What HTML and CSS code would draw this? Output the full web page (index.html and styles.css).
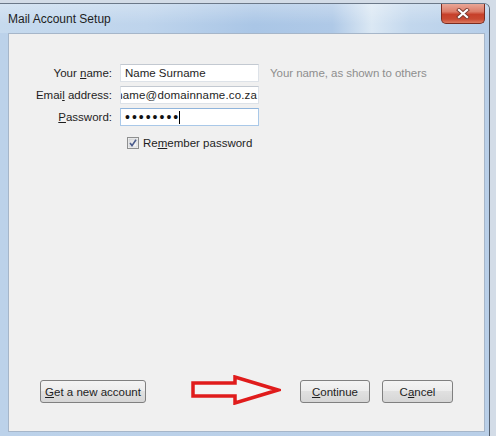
FILE: index.html
```html
<!DOCTYPE html>
<html lang="en">
<head>
<meta charset="utf-8">
<title>Mail Account Setup</title>
<link rel="stylesheet" href="styles.css">
</head>
<body>
<div class="window">
  <div class="titlebar">
    <span class="title">Mail Account Setup</span>
    <div class="close">
      <svg width="14" height="11" viewBox="0 0 14 11">
        <path d="M3 2 L11 9 M11 2 L3 9" stroke="#7a3a30" stroke-width="4" stroke-linecap="square"/>
        <path d="M3 2 L11 9 M11 2 L3 9" stroke="#ffffff" stroke-width="2.2" stroke-linecap="square"/>
      </svg>
    </div>
  </div>
  <div class="content">
    <div class="form">
      <span class="label">Your <u>n</u>ame:</span>
      <div class="field"><span>Name Surname</span></div>
      <span class="hint">Your name, as shown to others</span>

      <span class="label">Emai<u>l</u> address:</span>
      <div class="field field-end"><span class="email">name@domainname.co.za</span></div>
      <span></span>

      <span class="label"><u>P</u>assword:</span>
      <div class="field field-focus"><span class="dots">••••••••</span><span class="caret"></span></div>
      <span></span>

      <div class="check-row">
        <svg class="checkbox" width="12" height="12" viewBox="0 0 12 12">
          <defs>
            <linearGradient id="cb" x1="0" y1="0" x2="1" y2="1">
              <stop offset="0" stop-color="#dcdcdc"/>
              <stop offset="1" stop-color="#fbfbfb"/>
            </linearGradient>
          </defs>
          <rect x="0.5" y="0.5" width="11" height="11" fill="#f4f4f4" stroke="#8e8f8f"/>
          <rect x="2" y="2" width="8" height="8" fill="url(#cb)" stroke="#c6c9ce" stroke-width="0.6"/>
          <path d="M3 6 L5 8.6 L9 2.8" fill="none" stroke="#4a5b8c" stroke-width="1.6"/>
        </svg>
        <span>Re<u>m</u>ember password</span>
      </div>
    </div>

    <div class="footer">
      <button class="btn btn-get"><u>G</u>et a new account</button>
      <button class="btn btn-continue"><u>C</u>ontinue</button>
      <button class="btn btn-cancel">C<u>a</u>ncel</button>
      <svg class="arrow" width="90" height="30" viewBox="0 0 90 30">
        <path d="M2 8 H44 V2 L87 15 L44 28 V21 H2 Z" fill="#f4f4f4" stroke="#e01c1c" stroke-width="3.5" stroke-linejoin="miter"/>
      </svg>
    </div>
  </div>
</div>
</body>
</html>
```

FILE: styles.css
```css
html, body {
  margin: 0;
  height: 100%;
  overflow: hidden;
}

body {
  background: #d3dce7;
  font-family: "Liberation Sans", Arial, sans-serif;
  font-size: 11.5px;
  color: #1e1e1e;
}

.window {
  margin-top: 3px;
  width: 490px;
  height: 433px;
  box-sizing: border-box;
  border-top: 1px solid #6b7888;
  border-right: 1px solid #55606e;
  border-top-right-radius: 6px;
  background: linear-gradient(90deg, #bcd2ea 0%, #b9cfe8 100%);
  display: flex;
  flex-direction: column;
}

.titlebar {
  height: 29px;
  flex: none;
  display: flex;
  align-items: center;
  border-top-right-radius: 5px;
  background:
    linear-gradient(180deg, rgba(255,255,255,0.28) 0%, rgba(255,255,255,0) 70%),
    linear-gradient(90deg, #c6daee 0%, #bed4ec 30%, #aac6e6 52%, #afc9e7 68%, #dbe8f4 76%, #c2d7ed 84%, #b6cee9 100%);
}

.title {
  padding-left: 8px;
  font-size: 12px;
  color: #1e1e1e;
}

.close {
  margin-left: auto;
  margin-right: 4px;
  align-self: flex-start;
  width: 44px;
  height: 20px;
  box-sizing: border-box;
  border: 1px solid #7a2c20;
  border-top: none;
  border-radius: 0 0 5px 5px;
  background: linear-gradient(180deg, #e9a697 0%, #dc7d69 40%, #c6402a 55%, #c94a32 80%, #dd7b62 100%);
  display: flex;
  align-items: center;
  justify-content: center;
}

.content {
  flex: 1;
  margin: 0 4px 4px 8px;
  border: 1px solid #a6b6c9;
  background: #f0f0f0;
  display: flex;
  flex-direction: column;
}

.form {
  display: grid;
  grid-template-columns: 103px 139px auto;
  column-gap: 8px;
  row-gap: 4px;
  padding-top: 30px;
  align-items: center;
}

.label {
  text-align: right;
}

.field {
  height: 18px;
  box-sizing: border-box;
  border: 1px solid #dde2e8;
  border-top-color: #c3c9d1;
  background: #ffffff;
  padding: 0 4px;
  display: flex;
  align-items: center;
  overflow: hidden;
  white-space: nowrap;
}

.field-end {
  justify-content: flex-end;
  padding-right: 1px;
}

.email {
  letter-spacing: 0.15px;
}

.field-focus {
  border-color: #a9c8e8;
  border-top-color: #8fb4dc;
}

.dots {
  font-size: 14px;
  letter-spacing: 2px;
  color: #111;
  line-height: 1;
}

.caret {
  width: 1px;
  height: 13px;
  background: #000;
  margin-left: -1px;
}

.hint {
  margin-left: 3px;
  color: #8e8e8e;
  letter-spacing: -0.05px;
}

.check-row {
  grid-column: 2 / span 2;
  margin-top: 4px;
  height: 18px;
  padding-left: 7px;
  display: flex;
  align-items: center;
  gap: 4px;
}

.footer {
  margin-top: auto;
  padding: 0 31px 28px 31px;
  display: flex;
  align-items: center;
  position: relative;
}

.btn {
  height: 23px;
  box-sizing: border-box;
  border: 1px solid #808080;
  border-radius: 3px;
  background: linear-gradient(180deg, #f4f4f4 0%, #ececec 50%, #e0e0e0 50%, #d6d6d6 100%);
  font: inherit;
  color: #1e1e1e;
  padding: 0;
}

.btn-get {
  width: 106px;
}

.btn-continue {
  width: 70px;
  margin-left: auto;
}

.btn-cancel {
  width: 71px;
  margin-left: 12px;
}

.arrow {
  position: absolute;
  left: 182px;
  top: -5px;
}
```
